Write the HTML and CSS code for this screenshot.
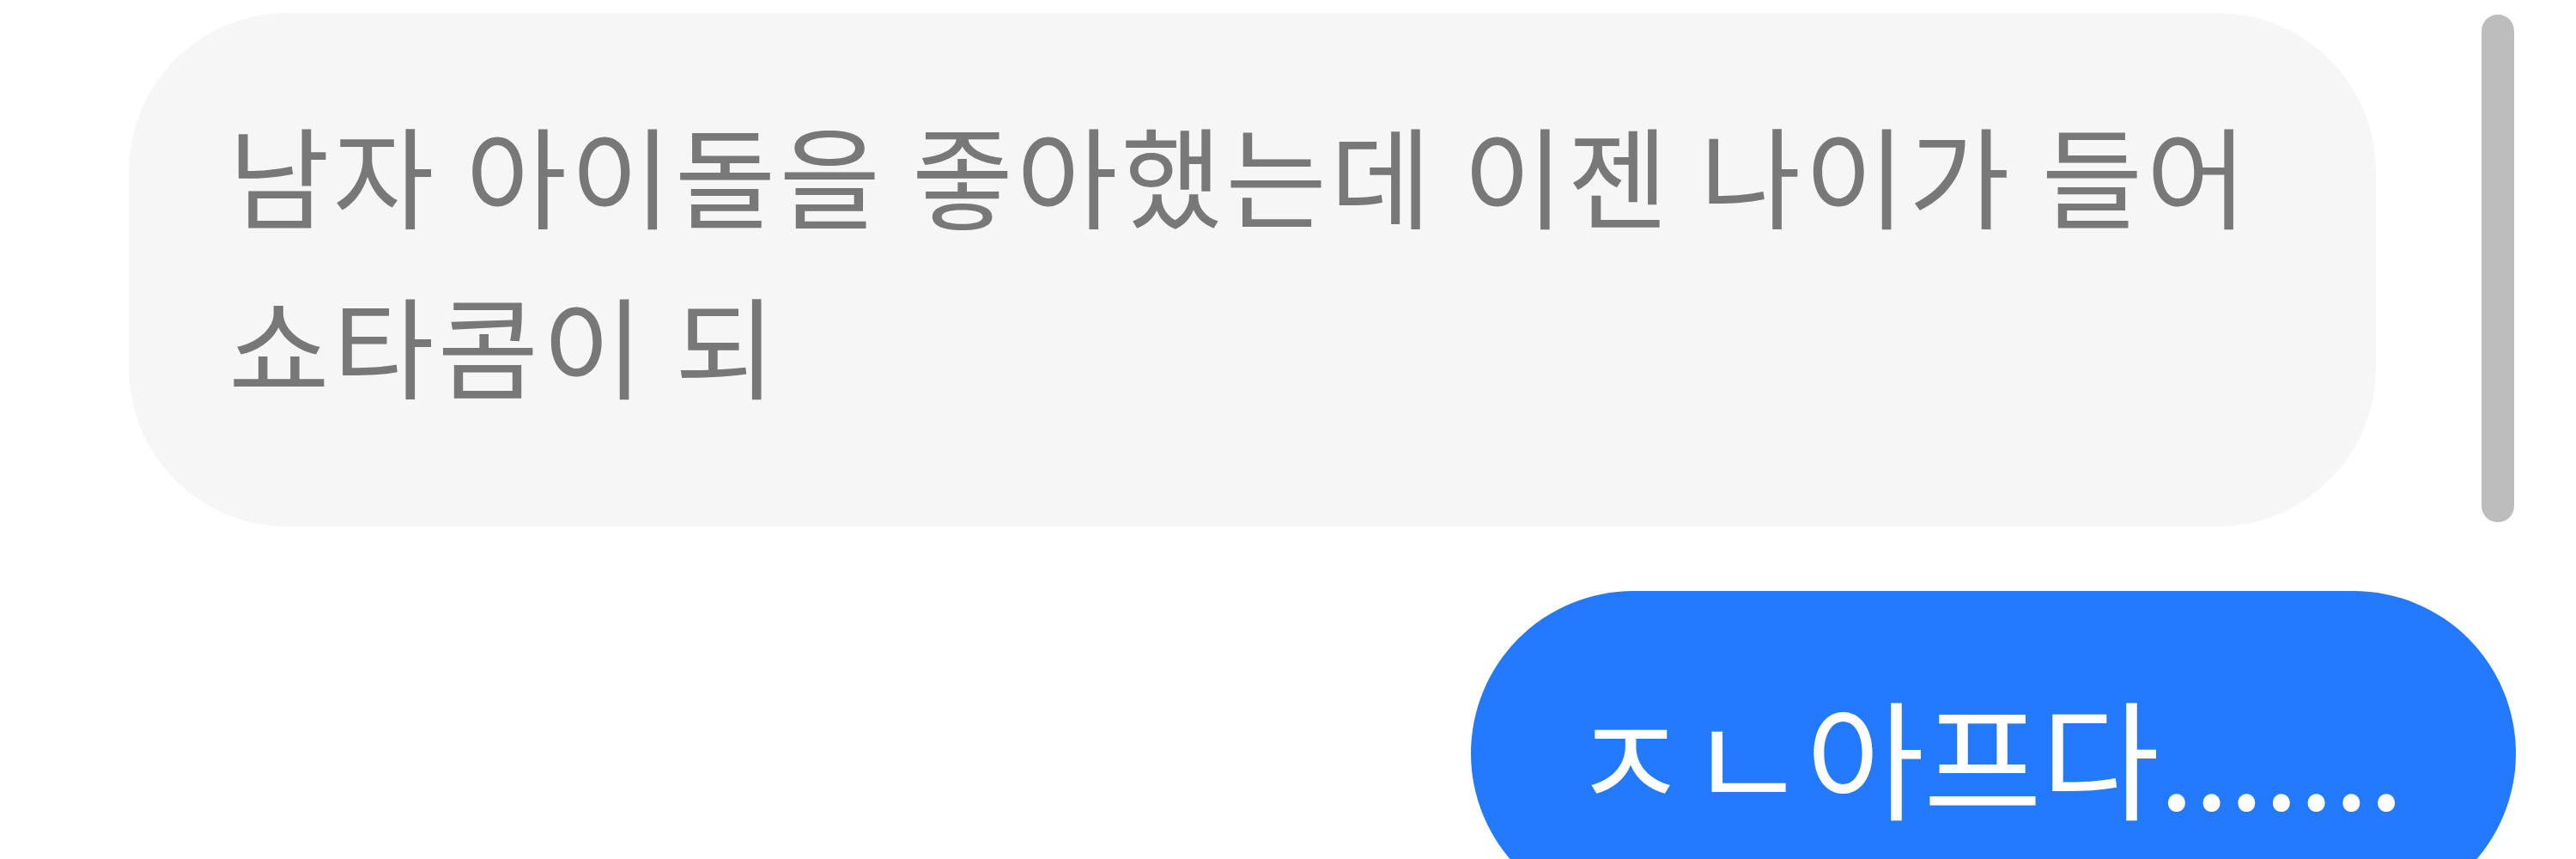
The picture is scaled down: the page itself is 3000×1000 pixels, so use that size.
FILE: index.html
```html
<!DOCTYPE html>
<html>
<head>
	<meta charset="utf-8">
	<title>chat</title>
	<link rel="stylesheet" href="styles.css">
</head>
<body>
	<div class="chat">
		<div class="msg in">남자 아이돌을 좋아했는데 이젠 나이가 들어<br>쇼타콤이 되</div>
		<div class="msg out">ㅈㄴ아프다.......</div>
	</div>
	<div class="thumb"></div>
</body>
</html>
```
FILE: styles.css
```css
*{
	margin: 0px;
	padding: 0px;
	box-sizing: border-box;
}
body{
	background: #fff;
	font-family: "Noto Sans CJK KR", "Noto Sans", sans-serif;
	overflow: hidden;
}
.chat{
	display: flex;
	flex-direction: column;
	padding: 15px 70px 0 150px;
}
.msg{
	white-space: nowrap;
}
.in{
	align-self: flex-start;
	width: 2617px;
	height: 598px;
	padding: 88px 0 0 116px;
	border-radius: 185px;
	background: #f6f6f6;
	color: #787878;
	font-size: 128px;
	letter-spacing: 4px;
	line-height: 198px;
}
.out{
	align-self: flex-end;
	display: flex;
	align-items: center;
	margin-top: 75px;
	width: 1217px;
	height: 378px;
	padding: 0 0 0 116px;
	border-radius: 190px;
	background: #237aff;
	color: #fff;
	font-size: 150px;
	letter-spacing: -1px;
}
.thumb{
	position: absolute;
	left: 2890px;
	top: 17px;
	width: 38px;
	height: 591px;
	border-radius: 19px;
	background: #bdbdbd;
}
```
